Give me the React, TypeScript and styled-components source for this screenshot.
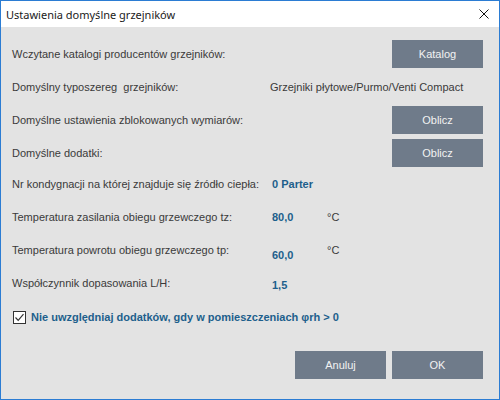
import styled, { createGlobalStyle } from "styled-components";

const Global = createGlobalStyle`
  html, body {
    margin: 0;
    padding: 0;
    background: #ffffff;
  }
`;

const Window = styled.div`
  box-sizing: border-box;
  width: 500px;
  height: 400px;
  border: 1px solid #2b7cd3;
  display: flex;
  flex-direction: column;
  background: #e3e3e3;
  font-family: "Liberation Sans", Arial, sans-serif;
  font-size: 11px;
  color: #3a3a3a;
`;

const TitleBar = styled.div`
  height: 26px;
  background: #ffffff;
  display: flex;
  align-items: center;
  justify-content: space-between;
  padding: 0 10px 0 5px;
  font-family: "Noto Sans", sans-serif;
  font-size: 11px;
  color: #1a1a1a;
`;

const Body = styled.div`
  flex: 1;
  display: flex;
  flex-direction: column;
  padding: 13px 16px 0 11px;
`;

const Row = styled.div<{ $h: number; $top?: number }>`
  height: ${(p) => p.$h}px;
  margin-top: ${(p) => p.$top ?? 0}px;
  display: grid;
  grid-template-columns: 258px 55px 1fr;
  align-items: center;
`;

const Label = styled.span`
  white-space: pre;
`;

const Plain = styled.span`
  grid-column: 2 / 4;
`;

const Value = styled.span<{ $shift?: number }>`
  color: #1d5f8c;
  font-weight: bold;
  padding-left: 2px;
  transform: translateY(${(p) => p.$shift ?? 0}px);
`;

const Unit = styled.span`
  color: #3a3a3a;
  padding-left: 2px;
`;

const Button = styled.button`
  width: 91px;
  height: 28px;
  border: none;
  background: #6f7b8a;
  color: #f2f2f2;
  font-family: "Liberation Sans", Arial, sans-serif;
  font-size: 11px;
  padding: 0;
`;

const ButtonCell = styled.div`
  grid-column: 2 / 4;
  display: flex;
  justify-content: flex-end;
`;

const CheckRow = styled.div`
  height: 36px;
  display: flex;
  align-items: center;
  gap: 5px;
  padding-left: 1px;
`;

const Box = styled.span`
  box-sizing: border-box;
  width: 13px;
  height: 13px;
  border: 1px solid #333333;
  background: #ffffff;
  display: flex;
  align-items: center;
  justify-content: center;
`;

const CheckText = styled.span`
  color: #1d5f8c;
  font-weight: bold;
`;

const Footer = styled.div`
  display: flex;
  justify-content: flex-end;
  gap: 6px;
  margin-top: 16px;
`;

export default function App() {
  return (
    <>
      <Global />
      <Window>
        <TitleBar>
          <span>Ustawienia domyślne grzejników</span>
          <svg width="10" height="10" viewBox="0 0 10 10">
            <path d="M0.5 0.5 L9.5 9.5 M9.5 0.5 L0.5 9.5" stroke="#111" strokeWidth="1" />
          </svg>
        </TitleBar>
        <Body>
          <Row $h={28}>
            <Label>Wczytane katalogi producentów grzejników:</Label>
            <ButtonCell>
              <Button>Katalog</Button>
            </ButtonCell>
          </Row>
          <Row $h={38}>
            <Label>Domyślny typoszereg  grzejników:</Label>
            <Plain>Grzejniki płytowe/Purmo/Venti Compact</Plain>
          </Row>
          <Row $h={28}>
            <Label>Domyślne ustawienia zblokowanych wymiarów:</Label>
            <ButtonCell>
              <Button>Oblicz</Button>
            </ButtonCell>
          </Row>
          <Row $h={28} $top={5}>
            <Label>Domyślne dodatki:</Label>
            <ButtonCell>
              <Button>Oblicz</Button>
            </ButtonCell>
          </Row>
          <Row $h={34}>
            <Label>Nr kondygnacji na której znajduje się źródło ciepła:</Label>
            <Value>0 Parter</Value>
          </Row>
          <Row $h={32}>
            <Label>Temperatura zasilania obiegu grzewczego tz:</Label>
            <Value>80,0</Value>
            <Unit>°C</Unit>
          </Row>
          <Row $h={34}>
            <Label>Temperatura powrotu obiegu grzewczego tp:</Label>
            <Value $shift={5}>60,0</Value>
            <Unit>°C</Unit>
          </Row>
          <Row $h={32}>
            <Label>Współczynnik dopasowania L/H:</Label>
            <Value $shift={2}>1,5</Value>
          </Row>
          <CheckRow>
            <Box>
              <svg width="11" height="11" viewBox="0 0 11 11">
                <path d="M1.5 5.5 L4.2 8.3 L9.5 2.2" fill="none" stroke="#333" strokeWidth="1.2" />
              </svg>
            </Box>
            <CheckText>Nie uwzględniaj dodatków, gdy w pomieszczeniach φrh &gt; 0</CheckText>
          </CheckRow>
          <Footer>
            <Button>Anuluj</Button>
            <Button>OK</Button>
          </Footer>
        </Body>
      </Window>
    </>
  );
}
